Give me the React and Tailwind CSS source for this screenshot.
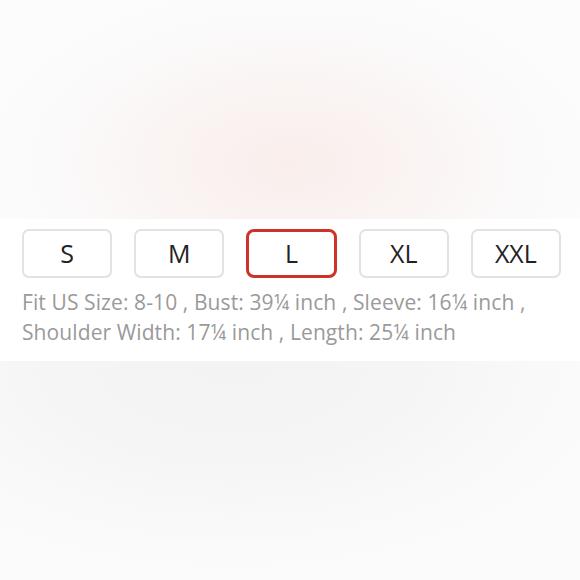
const sizes = ['S', 'M', 'L', 'XL', 'XXL']

export default function App() {
  const selected = 'L'

  return (
    <div className="w-[580px] h-[580px] flex flex-col bg-[#fbfbfb] font-['Open_Sans',_'Lato',_sans-serif]">
      {/* blurred product photo above */}
      <div className="h-[219px] bg-[radial-gradient(ellipse_55%_85%_at_50%_75%,#f9eeec_0%,#faf4f3_40%,#fbfafa_75%,#fcfcfc_100%)]" />

      <div className="bg-white h-[142px] pt-[10px] px-[22px] pr-[19px]">
        <div className="grid grid-cols-5 gap-[22px]">
          {sizes.map((s) => (
            <button
              key={s}
              className={`h-[49px] flex items-center justify-center text-[25px] text-[#222] bg-white ${
                s === selected
                  ? 'border-[3px] border-[#cf3228] rounded-[8px]'
                  : 'border-2 border-[#e2e2e2] rounded-[7px]'
              }`}
            >
              {s}
            </button>
          ))}
        </div>
        <p className="mt-[9px] text-[21px] leading-[30px] tracking-[0.1px] text-[#9a9a9a]">
          Fit US Size: 8-10 , Bust: 39¼ inch , Sleeve: 16¼ inch , Shoulder Width: 17¼ inch , Length: 25¼ inch
        </p>
      </div>

      {/* blurred photo below */}
      <div className="flex-1 bg-[radial-gradient(ellipse_70%_100%_at_40%_0%,#f3f3f3_0%,#f5f5f5_45%,#f9f9f9_75%,#fbfbfb_100%)]" />
    </div>
  )
}
